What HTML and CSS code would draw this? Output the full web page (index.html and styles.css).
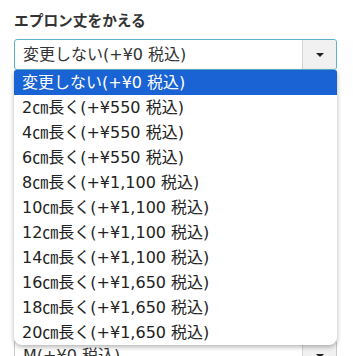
FILE: index.html
```html
<!DOCTYPE html>
<html lang="ja">
<head>
<meta charset="utf-8">
<link rel="stylesheet" href="styles.css">
</head>
<body>
<div class="page">
  <div class="field">
    <div class="label">エプロン丈をかえる</div>
    <div class="select focused">
      <div class="value">変更しない(+¥0 税込)</div>
      <div class="arrow"><span class="caret"></span></div>
      <ul class="menu">
        <li class="active">変更しない(+¥0 税込)</li>
        <li>2㎝長く(+¥550 税込)</li>
        <li>4㎝長く(+¥550 税込)</li>
        <li>6㎝長く(+¥550 税込)</li>
        <li>8㎝長く(+¥1,100 税込)</li>
        <li>10㎝長く(+¥1,100 税込)</li>
        <li>12㎝長く(+¥1,100 税込)</li>
        <li>14㎝長く(+¥1,100 税込)</li>
        <li>16㎝長く(+¥1,650 税込)</li>
        <li>18㎝長く(+¥1,650 税込)</li>
        <li>20㎝長く(+¥1,650 税込)</li>
      </ul>
    </div>
  </div>
  <div class="field second">
    <div class="select">
      <div class="value">M(+¥0 税込)</div>
      <div class="arrow"><span class="caret"></span></div>
    </div>
  </div>
</div>
</body>
</html>
```
FILE: styles.css
```css
html, body {
  margin: 0;
  padding: 0;
  background: #fff;
}
body {
  font-family: "DejaVu Sans", "Noto Sans CJK JP", sans-serif;
  color: #333;
}
.page {
  padding: 10px 16px 0 14px;
}
.label {
  font-family: "Noto Sans CJK JP", sans-serif;
  font-size: 14.7px;
  font-weight: bold;
  line-height: 20px;
  color: #333;
  height: 20px;
  margin-bottom: 9px;
}
.select {
  position: relative;
  display: flex;
  height: 29px;
  border: 1px solid #c8c8c8;
  border-radius: 3px;
  background: #fff;
}
.select.focused {
  border-color: #5ab3c9;
}
.value {
  flex: 1;
  font-size: 16px;
  line-height: 29px;
  padding-left: 8px;
  color: #333;
  white-space: nowrap;
}
.arrow {
  width: 33px;
  border-left: 1px solid #d4d4d4;
  background: #f1f1f1;
  display: flex;
  align-items: center;
  justify-content: center;
  border-radius: 0 3px 3px 0;
}
.caret {
  width: 0;
  height: 0;
  border-left: 4px solid transparent;
  border-right: 4px solid transparent;
  border-top: 4px solid #222;
}
.menu {
  position: absolute;
  left: -1px;
  right: -1px;
  top: 30px;
  margin: 0;
  padding: 0;
  list-style: none;
  background: #fff;
  border-radius: 0 0 8px 8px;
  box-shadow: 0 2px 5px rgba(0,0,0,0.3);
  z-index: 5;
}
.menu li {
  height: 25px;
  line-height: 25px;
  font-size: 16px;
  padding-left: 8px;
  color: #222;
  white-space: nowrap;
}
.menu li.active {
  background: #1a63d4;
  color: #fff;
  border-radius: 2px 2px 0 0;
}
.second {
  margin-top: 270px;
}
```
